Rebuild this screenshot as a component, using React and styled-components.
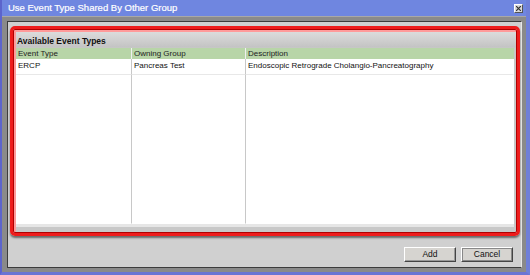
import React from 'react';
import styled, { createGlobalStyle } from 'styled-components';

const GlobalStyle = createGlobalStyle`
  html, body {
    margin: 0;
    padding: 0;
    background: #6a7ad8;
  }
  * { box-sizing: border-box; }
`;

const Window = styled.div`
  width: 530px;
  height: 275px;
  display: flex;
  flex-direction: column;
  background: #6f86e0;
  border-left: 2px solid #5c64cc;
  border-right: 4px solid #6f7fd8;
  border-bottom: 3px solid #6a74d4;
  font-family: "Liberation Sans", Arial, sans-serif;
  overflow: hidden;
`;

const TitleBar = styled.div`
  height: 16px;
  flex: none;
  display: flex;
  align-items: center;
  justify-content: space-between;
  padding: 0 3px 1px 6px;
  background: #6f86e0;
`;

const Title = styled.span`
  color: #fff;
  font-size: 9.5px;
  font-weight: normal;
  -webkit-text-stroke: 0.2px #fff;
`;

const CloseButton = styled.div`
  width: 9px;
  height: 9px;
  margin-top: 2px;
  background: #d8d8d8;
  border: 1px solid #fff;
  border-right-color: #555;
  border-bottom-color: #555;
  display: flex;
  align-items: center;
  justify-content: center;
`;

const Frame = styled.div`
  flex: 1;
  display: flex;
  background: #8a8a8a;
  padding: 4px 4px 4px 5px;
  border-top: 1px solid #a8a8a8;
`;

const Panel = styled.div`
  flex: 1;
  display: flex;
  flex-direction: column;
  background: #d0d0d0;
  border: 1px solid #3c3c3c;
  border-right-color: #e8e8e8;
  border-bottom-color: #3c3c3c;
  padding: 4px 1px 0 2px;
`;

const Highlight = styled.div`
  height: 210px;
  flex: none;
  display: flex;
  flex-direction: column;
  border: 3px solid #ee1c1c;
  border-radius: 5px;
  box-shadow: inset 0 0 0 1px #b00000, 0 2px 2px #6a6a6a, inset 1px 1px 0 2px #ff9a9a;
  padding: 2px 3px 6px 3px;
  background: linear-gradient(#e0e0e0 0px, #c4c4c4 18px, #c8c8c8 19px, #c8c8c8 100%);
`;

const SectionTitle = styled.div`
  height: 17px;
  flex: none;
  display: flex;
  align-items: flex-end;
  padding: 0 0 2px 1px;
  font-size: 8.5px;
  font-weight: bold;
  color: #111;
`;

const Table = styled.div`
  flex: 1;
  display: grid;
  grid-template-columns: 116px 114px 1fr;
  grid-template-rows: 11px 16px 1fr;
  background: #fff;
  border-bottom: 3px solid #e6e6e6;
`;

const HeaderCell = styled.div`
  background: #b8d5a8;
  border-right: 1px solid ${p => (p.$last ? '#b8d5a8' : '#f0f0f0')};
  font-size: 8px;
  color: #222;
  padding-left: 2px;
  line-height: 11px;
  white-space: nowrap;
`;

const Cell = styled.div`
  border-right: 1px solid ${p => (p.$last ? '#fff' : '#c8c8c8')};
  border-bottom: 1px solid ${p => (p.$filler ? 'transparent' : '#e8e8e8')};
  font-size: 8px;
  color: #111;
  padding-left: 2px;
  line-height: 14px;
  white-space: nowrap;
`;

const Footer = styled.div`
  flex: 1;
  display: flex;
  justify-content: flex-end;
  align-items: center;
  gap: 5px;
  padding: 5px 7px 0 0;
`;

const Button = styled.button`
  width: 52px;
  height: 15px;
  padding: 0;
  background: #d6d4d0;
  border: 1px solid #fff;
  border-right-color: #444;
  border-bottom-color: #444;
  box-shadow: ${p => (p.$focused ? 'inset 0 0 0 1px #888' : 'inset -1px -1px 0 #999')};
  font-family: "Liberation Sans", Arial, sans-serif;
  font-size: 8.5px;
  color: #111;
`;

const columns = ['Event Type', 'Owning Group', 'Description'];
const rows = [['ERCP', 'Pancreas Test', 'Endoscopic Retrograde Cholangio-Pancreatography']];

export default function App() {
  return (
    <>
      <GlobalStyle />
      <Window>
        <TitleBar>
          <Title>Use Event Type Shared By Other Group</Title>
          <CloseButton>
            <svg width="5" height="5" viewBox="0 0 5 5">
              <path d="M0 0L5 5M5 0L0 5" stroke="#333" strokeWidth="1.2" />
            </svg>
          </CloseButton>
        </TitleBar>
        <Frame>
          <Panel>
            <Highlight>
              <SectionTitle>Available Event Types</SectionTitle>
              <Table>
                {columns.map((c, i) => (
                  <HeaderCell key={c} $last={i === columns.length - 1}>{c}</HeaderCell>
                ))}
                {rows.map(r =>
                  r.map((v, i) => (
                    <Cell key={v} $last={i === r.length - 1}>{v}</Cell>
                  ))
                )}
                {columns.map((c, i) => (
                  <Cell key={c + '-fill'} $filler $last={i === columns.length - 1} />
                ))}
              </Table>
            </Highlight>
            <Footer>
              <Button>Add</Button>
              <Button $focused>Cancel</Button>
            </Footer>
          </Panel>
        </Frame>
      </Window>
    </>
  );
}
